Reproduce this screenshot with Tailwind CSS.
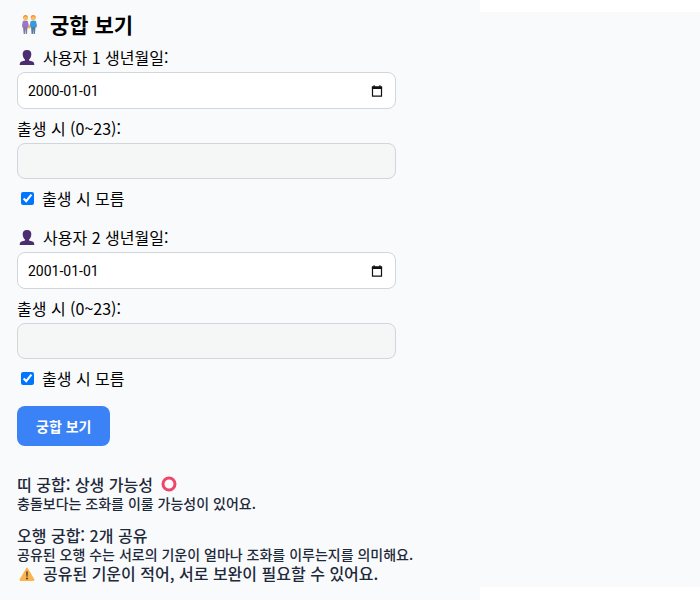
<!DOCTYPE html>
<html lang="ko">
<head>
    <meta charset="UTF-8">
    <meta name="viewport" content="width=device-width, initial-scale=1.0">
    <title>궁합 보기</title>
    <script src="https://cdn.jsdelivr.net/npm/@tailwindcss/browser@4"></script>
</head>
<body class="bg-white font-['Noto_Sans_CJK_KR',sans-serif] text-black">
    <div class="flex min-h-screen">
        <main class="w-full max-w-[480px] bg-[#f9fafc] px-[17px] pt-[10px] pb-2">
            <h2 class="flex items-center gap-[9px] text-[21px] leading-7 font-bold">
                <svg class="w-6 h-6" viewBox="0 0 24 24" aria-hidden="true">
                    <path d="M5 14L6 9.500Q8 8 10.500 9.500L12 14L14 9.500Q16 8 18.500 9.500L20 15L18.800 16L17 12L12.500 16.500L11.500 16.500L7 12L6 16L5 15Z" fill="#f5ae55"/>
                    <path d="M6 9Q8.500 7.800 11 9.500L11.500 14L10.500 15.500H6L5 14Z" fill="#9676d0"/>
                    <path d="M13.500 9.500Q16 7.800 19 9L20 14L18.500 15.500H14L13 14Z" fill="#339be5"/>
                    <path d="M6 15H10.500L10 22H8.800L8.400 17L8 22H6.700Z" fill="#817aa3"/>
                    <path d="M14 15H18.500L17.900 22H16.600L16.200 17L15.900 22H14.600Z" fill="#557c9b"/>
                    <circle cx="8.500" cy="6" r="2.500" fill="#fcbf60"/>
                    <circle cx="16.200" cy="6" r="2.500" fill="#fcbf60"/>
                    <path d="M6.300 6Q6 3 8.500 3T10.800 6L9.500 4.600H7.500Z" fill="#e5923d"/>
                    <path d="M14 6Q13.500 3 16.200 3T18.500 6L17 4.600H15.300Z" fill="#e5923d"/>
                </svg>
                궁합 보기
            </h2>

            <form id="matchForm">
                <!-- User 1 -->
                <label for="birth1" class="mt-[7px] flex items-center gap-[6px] text-[16px] leading-6">
                    <svg class="w-5 h-5" viewBox="0 0 20 20" aria-hidden="true">
                        <path d="M10 3C6.800 3 5.500 5 5.700 7.500C5.900 10 6.700 11.500 8 12.500V13.500L4.500 14.400C3 15 2.700 16.500 2.700 18H17.300C17.300 16.500 17 15 15.500 14.400L12 13.500V12.500C13.300 11.500 14.100 10 14.300 7.500C14.500 5 13.200 3 10 3Z" fill="#4b2d70"/>
                    </svg>
                    사용자 1 생년월일:
                </label>
                <div class="relative mt-[3px] max-w-[379px]">
                    <input id="birth1" type="text" inputmode="numeric" value="2000-01-01" class="block w-full h-[37px] px-[10px] pr-10 bg-white border border-gray-300 rounded-lg font-['Roboto',sans-serif] text-[14px]">
                    <button type="button" aria-label="날짜 선택" class="absolute right-3 top-3">
                        <svg class="block w-[14px] h-[14px]" viewBox="0 0 14 14"><path d="M2.500 3H11.500V12.200H2.500Z" fill="none" stroke="#111" stroke-width="1.200"/><path d="M1.900 2.400H12.100V5H1.900ZM3.500 1.200H4.700V3H3.500ZM9.300 1.200H10.500V3H9.300Z" fill="#111"/></svg>
                    </button>
                </div>
                <label for="hour1" class="mt-[7px] block text-[16px] leading-6">출생 시 (0~23):</label>
                <input id="hour1" type="number" min="0" max="23" disabled class="mt-[3px] block w-full max-w-[379px] h-[36px] px-[10px] bg-[#f5f7f7] border border-gray-300 rounded-lg text-[14px]">
                <label class="mt-[7px] flex items-center text-[16px] leading-6">
                    <input id="unknown1" type="checkbox" checked class="ml-1 mr-2 w-[13px] h-[13px] accent-[#0075ff]">
                    출생 시 모름
                </label>

                <!-- User 2 -->
                <label for="birth2" class="mt-[15px] flex items-center gap-[6px] text-[16px] leading-6">
                    <svg class="w-5 h-5" viewBox="0 0 20 20" aria-hidden="true">
                        <path d="M10 3C6.800 3 5.500 5 5.700 7.500C5.900 10 6.700 11.500 8 12.500V13.500L4.500 14.400C3 15 2.700 16.500 2.700 18H17.300C17.300 16.500 17 15 15.500 14.400L12 13.500V12.500C13.300 11.500 14.100 10 14.300 7.500C14.500 5 13.200 3 10 3Z" fill="#4b2d70"/>
                    </svg>
                    사용자 2 생년월일:
                </label>
                <div class="relative mt-[3px] max-w-[379px]">
                    <input id="birth2" type="text" inputmode="numeric" value="2001-01-01" class="block w-full h-[37px] px-[10px] pr-10 bg-white border border-gray-300 rounded-lg font-['Roboto',sans-serif] text-[14px]">
                    <button type="button" aria-label="날짜 선택" class="absolute right-3 top-3">
                        <svg class="block w-[14px] h-[14px]" viewBox="0 0 14 14"><path d="M2.500 3H11.500V12.200H2.500Z" fill="none" stroke="#111" stroke-width="1.200"/><path d="M1.900 2.400H12.100V5H1.900ZM3.500 1.200H4.700V3H3.500ZM9.300 1.200H10.500V3H9.300Z" fill="#111"/></svg>
                    </button>
                </div>
                <label for="hour2" class="mt-[7px] block text-[16px] leading-6">출생 시 (0~23):</label>
                <input id="hour2" type="number" min="0" max="23" disabled class="mt-[3px] block w-full max-w-[379px] h-[36px] px-[10px] bg-[#f5f7f7] border border-gray-300 rounded-lg text-[14px]">
                <label class="mt-[7px] flex items-center text-[16px] leading-6">
                    <input id="unknown2" type="checkbox" checked class="ml-1 mr-2 w-[13px] h-[13px] accent-[#0075ff]">
                    출생 시 모름
                </label>

                <button type="submit" class="mt-4 block h-10 px-[19px] bg-[#3b82f6] text-white text-[14px] font-bold rounded-lg">궁합 보기</button>
            </form>

            <!-- Result -->
            <div class="mt-7 text-[16px] leading-5 font-medium text-gray-800">
                <p class="flex items-center gap-2">
                    띠 궁합: 상생 가능성
                    <svg class="w-4 h-4" viewBox="0 0 16 16" aria-hidden="true"><circle cx="8" cy="8" r="6" fill="none" stroke="#f04468" stroke-width="3"/></svg>
                </p>
                <p class="text-[14px] leading-[18px]">충돌보다는 조화를 이룰 가능성이 있어요.</p>
                <p class="mt-[13px]">오행 궁합: 2개 공유</p>
                <p class="text-[14px] leading-[18px] whitespace-nowrap">공유된 오행 수는 서로의 기운이 얼마나 조화를 이루는지를 의미해요.</p>
                <p class="flex items-center gap-[6px] whitespace-nowrap">
                    <svg class="w-5 h-5" viewBox="0 0 20 20" aria-hidden="true">
                        <path d="M9.200 5.200Q10 3.900 10.800 5.200L17.300 16.200Q17.900 17.900 16.200 18H3.800Q2.100 17.900 2.700 16.200Z" fill="#fbb34c"/>
                        <path d="M9.200 8.500H10.800L10.500 13.700H9.500Z" fill="#433b3b"/>
                        <circle cx="10" cy="15.500" r="1" fill="#433b3b"/>
                    </svg>
                    공유된 기운이 적어, 서로 보완이 필요할 수 있어요.
                </p>
            </div>
        </main>
        <div class="mt-3 mb-[13px] flex-1 bg-[#f9fafc]"></div>
    </div>

    <script>
        // Birth hour is only editable when it is known
        [1, 2].forEach(function (n) {
            const unknown = document.getElementById("unknown" + n);
            const hour = document.getElementById("hour" + n);
            unknown.addEventListener("change", function () {
                hour.disabled = unknown.checked;
            });
        });

        document.getElementById("matchForm").addEventListener("submit", function (e) {
            e.preventDefault();
        });
    </script>
</body>
</html>
